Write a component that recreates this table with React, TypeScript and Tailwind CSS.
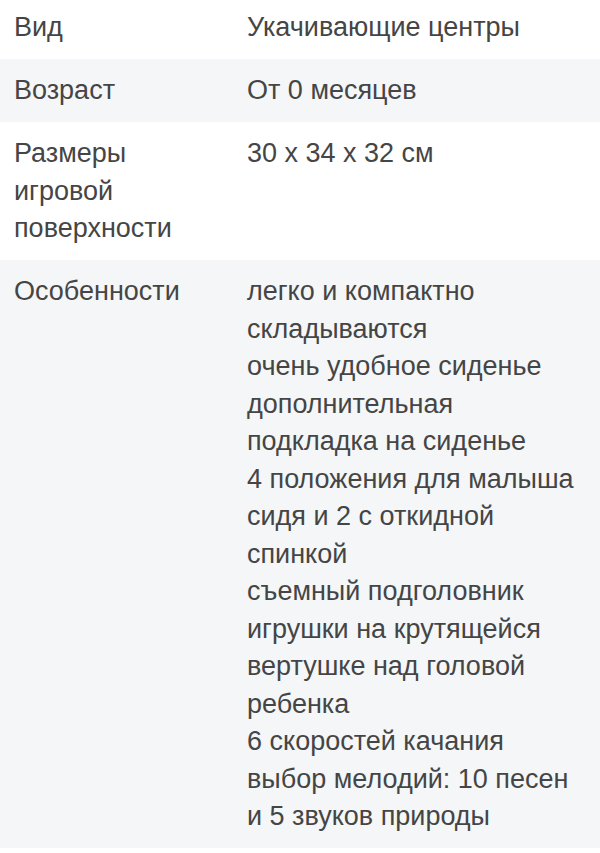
const rows: { label: string; value: string[] }[] = [
  { label: "Вид", value: ["Укачивающие центры"] },
  { label: "Возраст", value: ["От 0 месяцев"] },
  { label: "Размеры игровой поверхности", value: ["30 x 34 x 32 см"] },
  {
    label: "Особенности",
    value: [
      "легко и компактно складываются",
      "очень удобное сиденье",
      "дополнительная подкладка на сиденье",
      "4 положения для малыша сидя и 2 с откидной спинкой",
      "съемный подголовник",
      "игрушки на крутящейся вертушке над головой ребенка",
      "6 скоростей качания",
      "выбор мелодий: 10 песен и 5 звуков природы",
    ],
  },
];

export default function App() {
  return (
    <div
      className="min-h-[853px] w-[600px] bg-white text-[27px] leading-[37.5px] text-[#454545] -mt-[4px]"
      style={{ fontFamily: '"Liberation Sans", Arial, sans-serif' }}
    >
      {rows.map((row, i) => (
        <div
          key={row.label}
          className={`grid grid-cols-[247px_1fr] pt-[13px] pb-[12.5px] ${i % 2 === 1 ? "bg-[#f4f6f8]" : "bg-white"}`}
        >
          <div className="pl-[14px] pr-[40px]">{row.label}</div>
          <div className="pr-[12px]">
            {row.value.map((v) => (
              <div key={v}>{v}</div>
            ))}
          </div>
        </div>
      ))}
    </div>
  );
}
